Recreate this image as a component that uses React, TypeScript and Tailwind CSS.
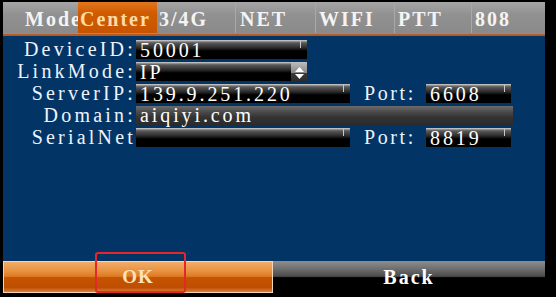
import React from 'react'

const tabs = [
  { label: 'Mode', active: false, className: 'w-[75px] pl-[22px]' },
  { label: 'Center', active: true, className: 'w-[79px] pl-[2px]' },
  { label: '3/4G', active: false, className: 'w-[78px] pl-[2px]' },
  { label: 'NET', active: false, className: 'w-[80px] pl-[4px] border-l border-[#a9a9a9]' },
  { label: 'WIFI', active: false, className: 'w-[79px] pl-[3px] border-l border-[#a9a9a9]' },
  { label: 'PTT', active: false, className: 'w-[77px] pl-[3px] border-l border-[#a9a9a9]' },
  { label: '808', active: false, className: 'w-[74px] pl-[3px] border-l border-[#a9a9a9]' },
]

const serif = "font-['Liberation_Serif',serif]"

interface FieldProps {
  width: string
  value?: string
  spinner?: boolean
  disabled?: boolean
}

const Field: React.FC<FieldProps> = ({ width, value, spinner, disabled }) => {
  const bg = disabled
    ? 'bg-[linear-gradient(to_bottom,#6c6c6c_0%,#474747_35%,#333333_60%,#2b2b2b_100%)]'
    : 'bg-[linear-gradient(to_bottom,#a2a2a2_0%,#5a5a5a_10%,#262626_40%,#000000_55%,#000000_100%)] border-t border-[#bdbdbd]'
  return (
    <div className={`relative h-[19px] ${width} ${bg} flex items-center`}>
      <span className="pl-[4px] text-[20px] leading-[19px] tracking-[2.9px] text-white whitespace-nowrap">
        {value}
      </span>
      {!disabled && !spinner && (
        <span className="absolute right-[6px] top-0 h-[7px] w-px bg-[#c8c8c8]" />
      )}
      {spinner && (
        <div className="absolute right-0 top-0 h-[19px] w-[16px] bg-[linear-gradient(to_bottom,#b8b8b8_0%,#8a8a8a_50%,#3a3a3a_55%,#2a2a2a_100%)] flex flex-col items-center justify-center gap-[2px]">
          <svg width="9" height="5" viewBox="0 0 9 5">
            <path d="M0 5 L4.5 0 L9 5 Z" fill="#ffffff" />
          </svg>
          <svg width="9" height="5" viewBox="0 0 9 5">
            <path d="M0 0 L4.5 5 L9 0 Z" fill="#ffffff" />
          </svg>
        </div>
      )}
    </div>
  )
}

const Label: React.FC<{ text: string }> = ({ text }) => (
  <div className="w-[133px] text-right text-[20px] leading-[19px] tracking-[3.2px] text-[#eef3fb] whitespace-nowrap">
    {text}
  </div>
)

const Port: React.FC<{ value: string }> = ({ value }) => (
  <>
    <div className="ml-[14px] w-[62px] text-[20px] leading-[19px] tracking-[2.6px] text-[#eef3fb]">Port:</div>
    <Field width="w-[85px]" value={value} />
  </>
)

const App: React.FC = () => {
  return (
    <div className={`relative w-[556px] h-[297px] bg-black pl-[3px] pt-[2px] ${serif}`}>
      <div className="w-[542px] h-[291px] flex flex-col">
        {/* Tab bar */}
        <div className="h-[31px] flex bg-[linear-gradient(to_bottom,#a6a6a6_0%,#919191_40%,#8a8a8a_100%)]">
          {tabs.map((t) => (
            <div
              key={t.label}
              className={`${t.className} h-full flex items-center pt-[3px] text-[20px] font-bold tracking-[2px] ${
                t.active
                  ? 'bg-[linear-gradient(to_bottom,#e2761e_0%,#d05c00_35%,#c85400_100%)] text-[#ffdca6]'
                  : 'text-[#f4f4f4]'
              }`}
            >
              {t.label}
            </div>
          ))}
        </div>
        <div className="h-[3px] bg-[#b45a22] border-t border-[#d97a3c]" />

        {/* Form */}
        <div className="flex-1 bg-[#023566] pt-[4px] flex flex-col gap-[3px]">
          <div className="flex items-center">
            <Label text="DeviceID:" />
            <Field width="w-[171px]" value="50001" />
          </div>
          <div className="flex items-center">
            <Label text="LinkMode:" />
            <Field width="w-[171px]" value="IP" spinner />
          </div>
          <div className="flex items-center">
            <Label text="ServerIP:" />
            <Field width="w-[214px]" value="139.9.251.220" />
            <Port value="6608" />
          </div>
          <div className="flex items-center">
            <Label text="Domain:" />
            <Field width="w-[377px]" value="aiqiyi.com" disabled />
          </div>
          <div className="flex items-center">
            <Label text="SerialNet" />
            <Field width="w-[214px]" />
            <Port value="8819" />
          </div>
        </div>

        {/* Buttons */}
        <div className="h-[32px] flex">
          <button className="w-[270px] h-full border border-[#f3d6b8] bg-[linear-gradient(to_bottom,#f2ac6a_0%,#e8923e_30%,#dd7a26_48%,#c65300_52%,#c04e00_85%,#d8823c_100%)] text-[19px] font-bold tracking-[1px] text-[#ffe2b8] flex items-center justify-center">
            OK
          </button>
          <button className="w-[272px] h-full bg-[linear-gradient(to_bottom,#8e8e8e_0%,#6e6e6e_25%,#4a4a4a_48%,#000000_52%,#000000_100%)] text-[20px] font-bold tracking-[2px] text-white flex items-center justify-center">
            Back
          </button>
        </div>
      </div>

      {/* annotation */}
      <div className="absolute left-[95px] top-[252px] w-[91px] h-[41px] border-2 border-[#e5262b] rounded-[3px]" />
    </div>
  )
}

export default App
